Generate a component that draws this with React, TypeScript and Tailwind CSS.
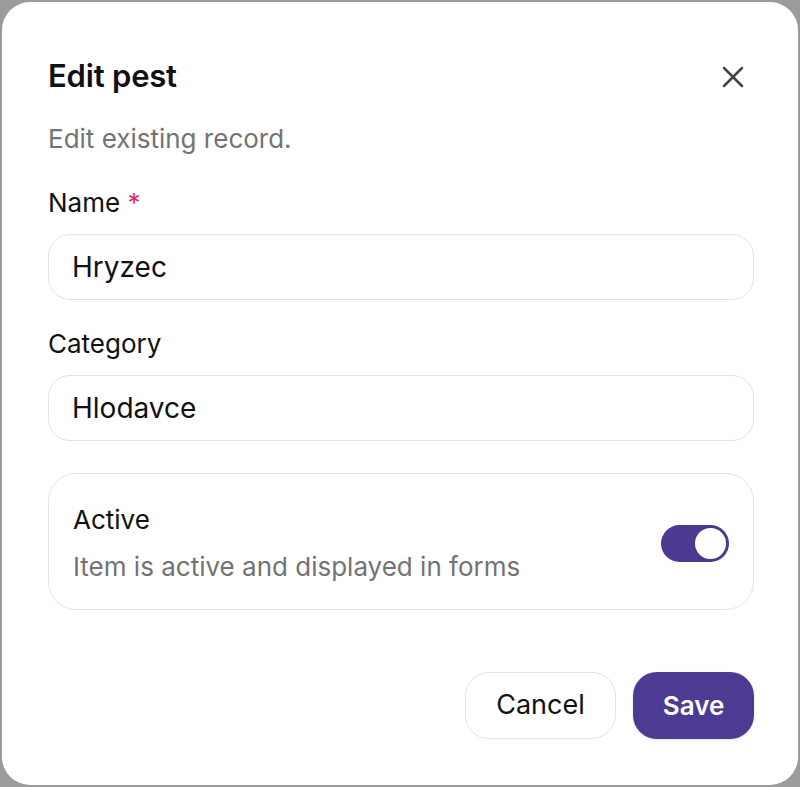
import React, { useState } from "react";

export default function App() {
  const [name, setName] = useState("Hryzec");
  const [category, setCategory] = useState("Hlodavce");
  const [active, setActive] = useState(true);

  return (
    <div className="h-[787px] w-full bg-[#9b9b9b] p-[2px]" style={{ fontFamily: "Inter, 'Noto Sans', sans-serif" }}>
      <div className="flex h-full w-full flex-col rounded-[28px] bg-white pl-[46px] pr-[44px] pt-[56px] pb-[46px]">
        {/* header */}
        <div className="flex items-center justify-between">
          <h2 className="text-[31px] font-semibold leading-[36px] tracking-[-0.2px] text-[#111]">Edit pest</h2>
          <button className="mr-[10px] mt-[2px] text-[#444]">
            <svg width="22" height="22" viewBox="0 0 22 22" fill="none" stroke="currentColor" strokeWidth="2.5" strokeLinecap="round">
              <path d="M2 2 20 20" />
              <path d="M20 2 2 20" />
            </svg>
          </button>
        </div>
        <p className="mt-[29px] text-[26px] leading-[32px] text-[#737373]">Edit existing record.</p>

        <label className="mt-[32px] text-[26px] leading-[32px] text-[#111]">
          Name <span className="text-[#d6336c]">*</span>
        </label>
        <input
          value={name}
          onChange={(e) => setName(e.target.value)}
          className="mt-[15px] h-[66px] w-full rounded-[22px] border border-[#e3e3e3] px-[23px] text-[28px] text-[#111] outline-none"
        />

        <label className="mt-[28px] text-[26px] leading-[32px] text-[#111]">Category</label>
        <input
          value={category}
          onChange={(e) => setCategory(e.target.value)}
          className="mt-[15px] h-[66px] w-full rounded-[22px] border border-[#e3e3e3] px-[23px] text-[28px] text-[#111] outline-none"
        />

        {/* active card */}
        <div className="mt-[32px] flex items-center justify-between rounded-[28px] border border-[#e3e3e3] px-[24px] pt-[30px] pb-[26px]">
          <div className="flex flex-col gap-[15px]">
            <span className="text-[26px] leading-[32px] text-[#111]">Active</span>
            <span className="text-[26px] leading-[32px] text-[#737373]">Item is active and displayed in forms</span>
          </div>
          <button
            onClick={() => setActive(!active)}
            className={`flex h-[37px] w-[68px] items-center rounded-full p-[3px] ${active ? "justify-end bg-[#4b3a8f]" : "justify-start bg-[#d4d4d4]"}`}
          >
            <span className="h-[31px] w-[31px] rounded-full bg-white" />
          </button>
        </div>

        {/* footer */}
        <div className="mt-auto flex justify-end gap-[17px]">
          <button className="h-[67px] w-[151px] rounded-[24px] border border-[#e3e3e3] bg-white text-[27px] text-[#111]">Cancel</button>
          <button className="h-[67px] w-[121px] rounded-[24px] bg-[#4d3a93] text-[26px] font-semibold text-white shadow-sm">Save</button>
        </div>
      </div>
    </div>
  );
}
